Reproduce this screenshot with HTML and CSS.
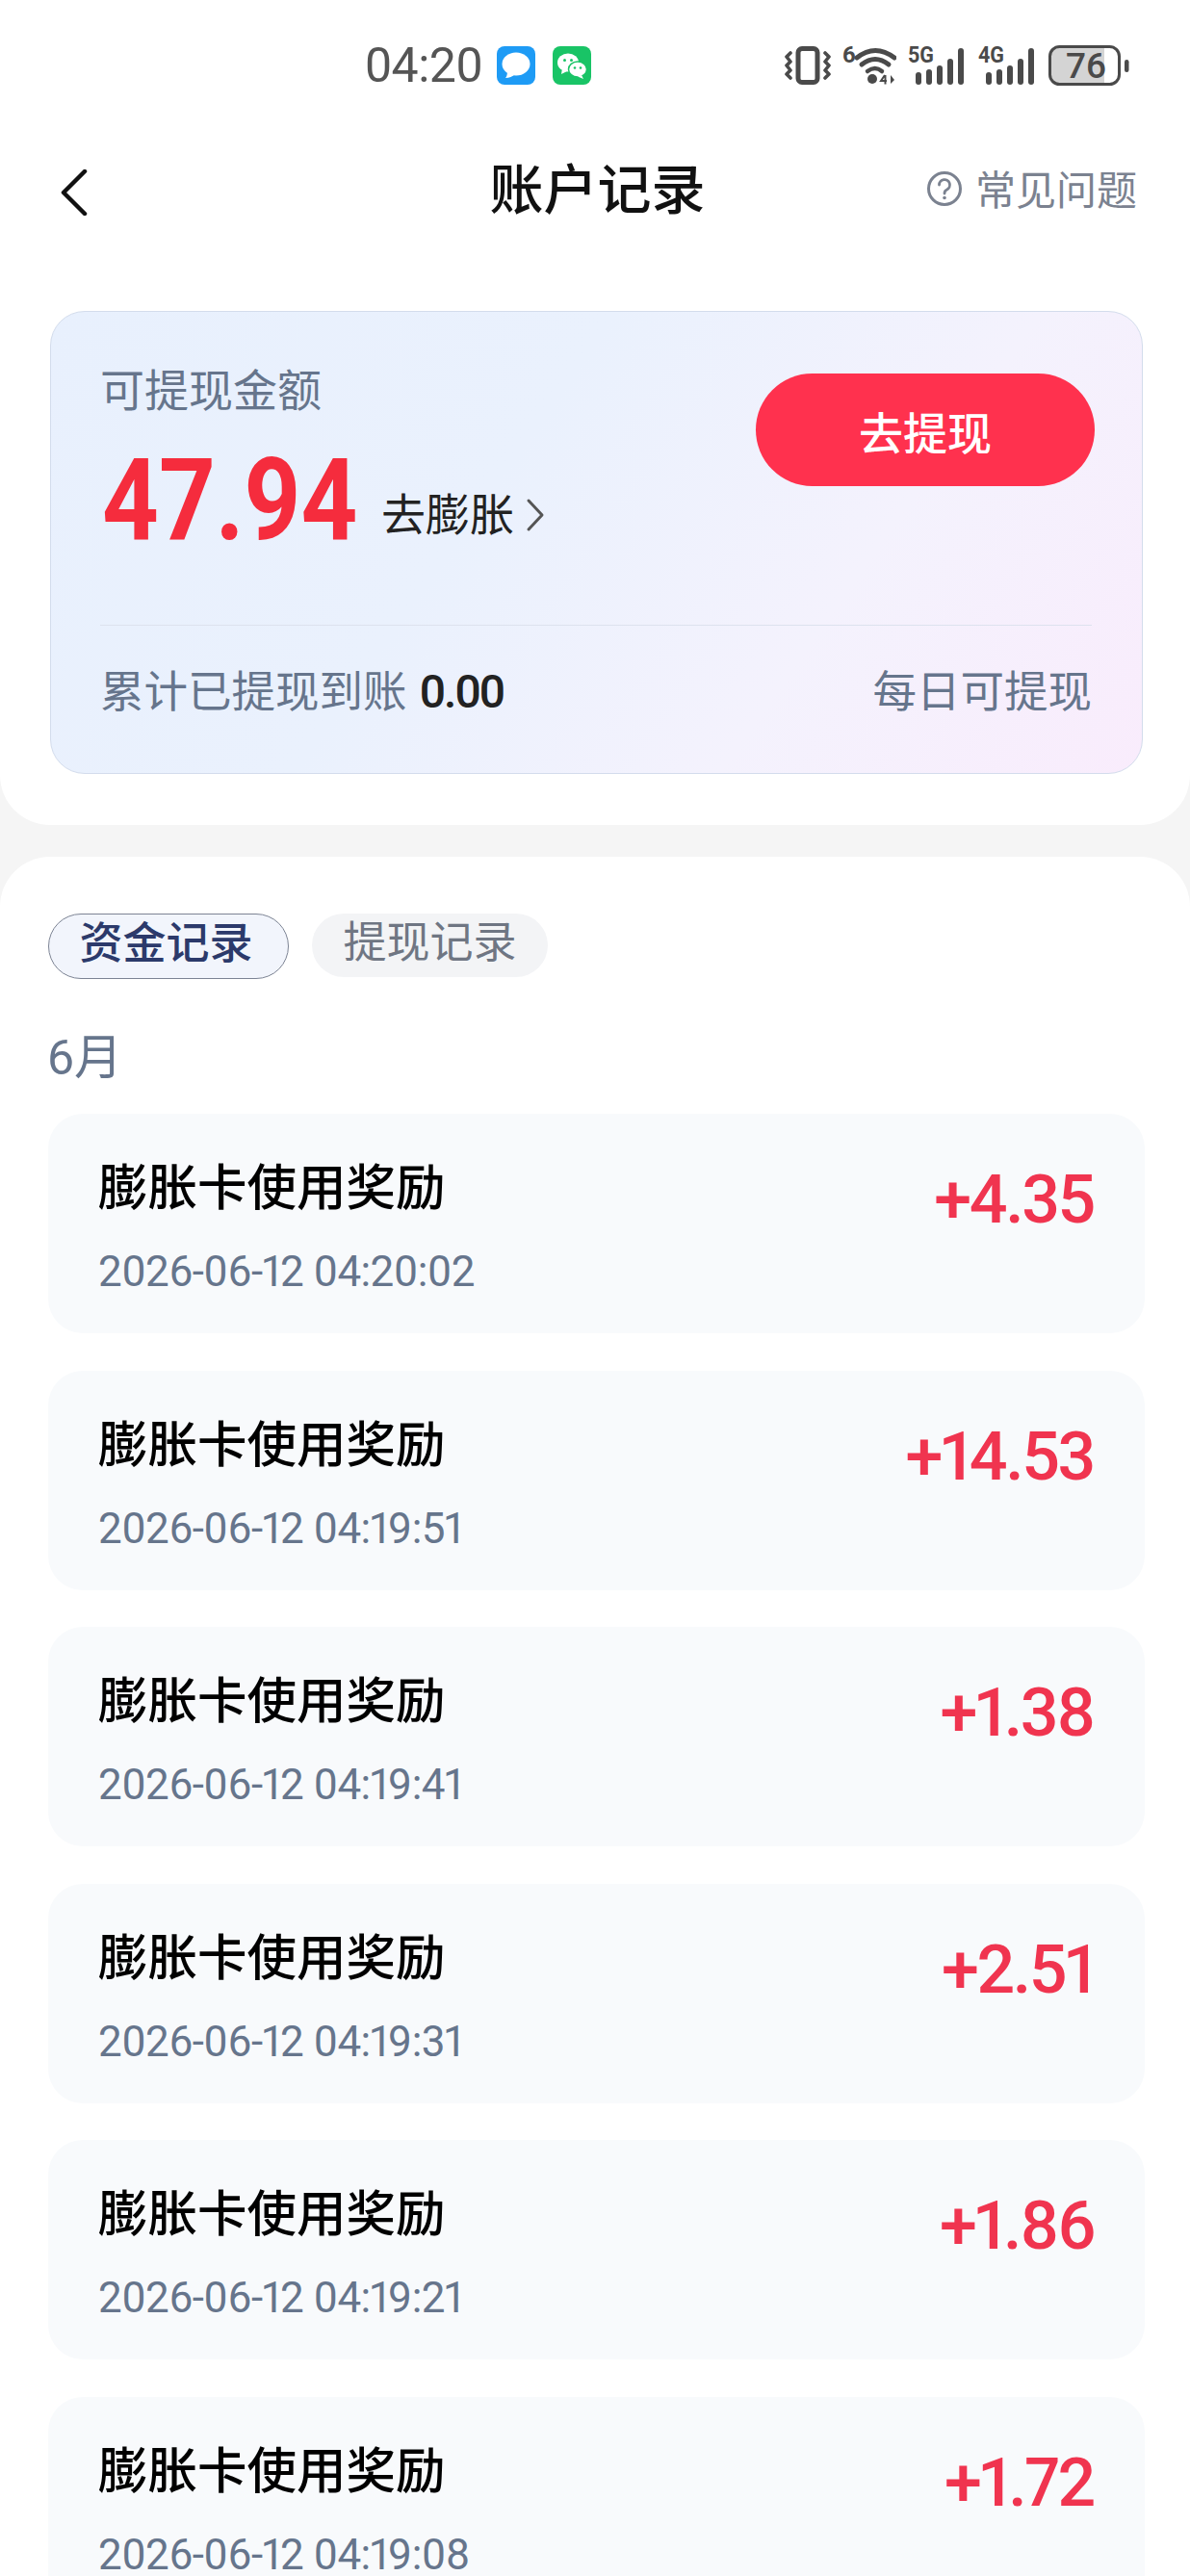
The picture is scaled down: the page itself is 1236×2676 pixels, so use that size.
FILE: index.html
```html
<!DOCTYPE html>
<html lang="zh-CN">
<head>
  <meta charset="UTF-8">
  <meta name="viewport" content="width=device-width, initial-scale=1">
  <title>账户记录</title>
  <link rel="stylesheet" href="styles.css">
</head>
<body>

  <!-- 顶部：状态栏 + 标题 + 余额卡片 -->
  <div class="top-panel">
    <div class="status-bar">
      <div class="status-left">
        <span class="time">04:20</span>
        <svg class="app-icon" viewBox="0 0 40 40">
          <rect width="40" height="40" rx="8" fill="#1e9bf5"/>
          <ellipse cx="20" cy="18.5" rx="14.5" ry="12" fill="#fff"/>
          <path d="M11 26 Q11 31 9 33 Q15 33 19 29 Z" fill="#fff"/>
        </svg>
        <svg class="app-icon" viewBox="0 0 40 40">
          <rect width="40" height="40" rx="8" fill="#19c466"/>
          <ellipse cx="16" cy="17" rx="11" ry="9.5" fill="#fff"/>
          <path d="M10 23 L9 29 L15 26 Z" fill="#fff"/>
          <ellipse cx="26" cy="24" rx="9.5" ry="8" fill="#fff" stroke="#19c466" stroke-width="1.5"/>
          <path d="M30 30 L32 34 L26 31.5 Z" fill="#fff"/>
          <circle cx="12.5" cy="14.5" r="1.5" fill="#19c466"/>
          <circle cx="19.5" cy="14.5" r="1.5" fill="#19c466"/>
          <circle cx="23" cy="22.5" r="1.3" fill="#19c466"/>
          <circle cx="29" cy="22.5" r="1.3" fill="#19c466"/>
        </svg>
      </div>
      <div class="status-right">
        <svg class="st-vibrate" viewBox="0 0 48 40" fill="none" stroke="#4a4a4a">
          <rect x="14" y="2.5" width="20" height="35" rx="4" stroke-width="5"/>
          <path d="M6 7 L2 11 L6 16 L2 20 L6 25 L2 29 L6 33" stroke-width="3.6" stroke-linecap="round" stroke-linejoin="round"/>
          <path d="M42 7 L46 11 L42 16 L46 20 L42 25 L46 29 L42 33" stroke-width="3.6" stroke-linecap="round" stroke-linejoin="round"/>
        </svg>
        <svg class="st-wifi" viewBox="0 -6 56 46" fill="none" stroke="#4a4a4a">
          <text x="0" y="17" class="st-text" font-size="24">6</text>
          <path d="M15 12 Q34 -3 54 12" stroke-width="5" stroke-linecap="round"/>
          <path d="M20 19 Q34 8 48 19" stroke-width="5" stroke-linecap="round"/>
          <path d="M26 26 Q34 20 41 26" stroke-width="4.5" stroke-linecap="round"/>
          <circle cx="31" cy="34" r="5" fill="#4a4a4a" stroke="none"/>
          <path d="M44 30 L40 36 H46 M44.5 30 V39.5" stroke-width="2"/>
          <path d="M50 30 V39 L54 35 Z" fill="#4a4a4a" stroke="none"/>
        </svg>
        <svg class="st-signal" viewBox="0 -6 58 46" fill="#4a4a4a">
          <text x="0" y="17" class="st-text" font-size="24" textLength="27" lengthAdjust="spacingAndGlyphs">5G</text>
          <rect x="8" y="27" width="6" height="13" rx="3"/>
          <rect x="19" y="24" width="6" height="16" rx="3"/>
          <rect x="30" y="20" width="6" height="20" rx="3"/>
          <rect x="41" y="13" width="6" height="27" rx="3"/>
          <rect x="52" y="2" width="6" height="38" rx="3"/>
        </svg>
        <svg class="st-signal" viewBox="0 -6 58 46" fill="#4a4a4a">
          <text x="0" y="17" class="st-text" font-size="24" textLength="27" lengthAdjust="spacingAndGlyphs">4G</text>
          <rect x="8" y="27" width="6" height="13" rx="3"/>
          <rect x="19" y="24" width="6" height="16" rx="3"/>
          <rect x="30" y="20" width="6" height="20" rx="3"/>
          <rect x="41" y="13" width="6" height="27" rx="3"/>
          <rect x="52" y="2" width="6" height="38" rx="3"/>
        </svg>
        <svg class="st-battery" viewBox="0 0 84 42">
          <path d="M10 3 H58 V39 H10 A8 8 0 0 1 2 31 V11 A8 8 0 0 1 10 3 Z" fill="#d4d4d4"/>
          <rect x="1.5" y="1.5" width="72" height="39" rx="10" fill="none" stroke="#4a4a4a" stroke-width="3"/>
          <rect x="79" y="15" width="4.5" height="13" rx="2.2" fill="#4a4a4a"/>
          <text x="18" y="34" class="st-battery-num" font-size="37">76</text>
        </svg>
      </div>
    </div>

    <div class="header">
      <svg class="back" viewBox="0 0 28 48" fill="none" stroke="#111" stroke-width="4.5" stroke-linecap="round" stroke-linejoin="round">
        <path d="M25 2 L3 24 L25 46"/>
      </svg>
      <div class="title">账户记录</div>
      <div class="faq">
        <svg class="faq-icon" viewBox="0 0 38 38" fill="none" stroke="#7b8290">
          <circle cx="19" cy="19" r="16.5" stroke-width="3"/>
          <path d="M13.5 15 A5.5 5.5 0 1 1 21.5 20 Q19 21.2 19 24" stroke-width="2.8" stroke-linecap="round"/>
          <circle cx="19" cy="28.5" r="1.8" fill="#7b8290" stroke="none"/>
        </svg>
        <span>常见问题</span>
      </div>
    </div>

    <div class="balance-card">
      <div class="balance-top">
        <div class="balance-left">
          <div class="balance-label">可提现金额</div>
          <div class="balance-row">
            <span class="balance-num">47.94</span>
            <span class="inflate">去膨胀</span>
            <svg class="inflate-arrow" viewBox="0 0 20 36" fill="none" stroke="#555" stroke-width="3" stroke-linecap="round" stroke-linejoin="round">
              <path d="M3 3 L17 18 L3 33"/>
            </svg>
          </div>
        </div>
        <button class="withdraw-btn">去提现</button>
      </div>
      <div class="balance-bottom">
        <div class="total">累计已提现到账 <b>0.00</b></div>
        <div class="daily">每日可提现</div>
      </div>
    </div>
  </div>

  <!-- 记录列表 -->
  <div class="records">
    <div class="tabs">
      <div class="tab tab-active">资金记录</div>
      <div class="tab">提现记录</div>
    </div>
    <div class="month">6月</div>

    <div class="record">
      <div>
        <div class="record-name">膨胀卡使用奖励</div>
        <div class="record-date">2026-06-12 04:20:02</div>
      </div>
      <div class="record-amount">+4.35</div>
    </div>
    <div class="record">
      <div>
        <div class="record-name">膨胀卡使用奖励</div>
        <div class="record-date">2026-06-12 04:19:51</div>
      </div>
      <div class="record-amount">+14.53</div>
    </div>
    <div class="record">
      <div>
        <div class="record-name">膨胀卡使用奖励</div>
        <div class="record-date">2026-06-12 04:19:41</div>
      </div>
      <div class="record-amount">+1.38</div>
    </div>
    <div class="record">
      <div>
        <div class="record-name">膨胀卡使用奖励</div>
        <div class="record-date">2026-06-12 04:19:31</div>
      </div>
      <div class="record-amount">+2.51</div>
    </div>
    <div class="record">
      <div>
        <div class="record-name">膨胀卡使用奖励</div>
        <div class="record-date">2026-06-12 04:19:21</div>
      </div>
      <div class="record-amount">+1.86</div>
    </div>
    <div class="record">
      <div>
        <div class="record-name">膨胀卡使用奖励</div>
        <div class="record-date">2026-06-12 04:19:08</div>
      </div>
      <div class="record-amount">+1.72</div>
    </div>
  </div>

</body>
</html>
```

FILE: styles.css
```css
* { margin: 0; padding: 0; box-sizing: border-box; }

html, body {
  height: 2676px;
  overflow: hidden;
}

body {
  font-family: Roboto, 'Noto Sans CJK SC', sans-serif;
  background-color: #f5f5f5;
  color: #111;
}

/* top */
.top-panel {
  height: 857px;
  background-color: #fff;
  border-radius: 0 0 52px 52px;
}

.status-bar {
  height: 136px;
  display: flex;
  justify-content: space-between;
  align-items: center;
  padding: 0 63px 0 379px;
}

.status-left {
  display: flex;
  align-items: center;
  gap: 18px;
}

.time {
  font-size: 50px;
  letter-spacing: -0.5px;
  color: #555;
  margin-right: -3px;
}

.app-icon {
  width: 40px;
  height: 40px;
}

.status-right {
  display: flex;
  align-items: center;
  gap: 12px;
}

.st-text {
  font-family: Roboto, sans-serif;
  font-weight: 700;
  fill: #4a4a4a;
  stroke: none;
}

.st-battery-num {
  font-family: Roboto, sans-serif;
  font-weight: 500;
  fill: #4a4a4a;
}

.st-vibrate { width: 48px; height: 40px; }
.st-wifi { width: 56px; height: 46px; margin-top: -6px; }
.st-signal { width: 58px; height: 46px; margin-top: -6px; }
.st-signal + .st-signal { margin-left: 3px; }
.st-battery { width: 84px; height: 42px; margin-left: 3px; }

.header {
  height: 112px;
  display: grid;
  grid-template-columns: 1fr auto 1fr;
  align-items: center;
  padding: 0 55px 0 63px;
}

.back {
  width: 28px;
  height: 48px;
  margin-top: 16px;
}

.title {
  margin-left: -3px;
  font-size: 56px;
  font-weight: 500;
  color: #111;
}

.faq {
  display: flex;
  align-items: center;
  justify-content: flex-end;
  gap: 13px;
  margin-top: 4px;
  font-size: 42px;
  color: #7b8290;
}

.faq-icon {
  width: 38px;
  height: 38px;
  margin-top: 4px;
}

.balance-card {
  height: 481px;
  margin: 75px 49px 0 52px;
  padding: 52px 52px 0 51px;
  border: 1px solid #d3dcec;
  border-radius: 36px;
  background: linear-gradient(125deg, #e8f0fd 0%, #eaf1fd 40%, #f4f2fd 70%, #f9ecfc 100%);
}

.balance-top {
  display: flex;
  justify-content: space-between;
  align-items: flex-start;
  height: 273px;
}

.balance-label {
  font-size: 46px;
  line-height: 60px;
  color: #66758c;
}

.balance-row {
  display: flex;
  align-items: flex-end;
  margin-top: 24px;
}

/* the reference digits are narrower than Roboto Bold */
.balance-num {
  font-size: 118px;
  font-weight: 700;
  line-height: 120px;
  color: #f52c3d;
  transform: scaleX(0.87);
  transform-origin: left center;
  margin: 0 -38px 0 2px;
}

.inflate {
  font-size: 46px;
  line-height: 60px;
  color: #222;
  margin: 0 0 15px 23px;
}

.inflate-arrow {
  width: 20px;
  height: 36px;
  margin: 0 0 27px 12px;
}

.withdraw-btn {
  width: 352px;
  height: 117px;
  margin: 12px -3px 0 0;
  border: none;
  border-radius: 59px;
  background-color: #ff314e;
  color: #fff;
  font-family: inherit;
  font-size: 46px;
  font-weight: 500;
}

.balance-bottom {
  display: flex;
  justify-content: space-between;
  align-items: center;
  height: 140px;
  padding-bottom: 10px;
  border-top: 1px solid #dde2ee;
  font-size: 45.5px;
  color: #66758c;
}

.total b {
  font-size: 48px;
  font-weight: 500;
  letter-spacing: -2px;
  color: #222;
  margin-left: 2px;
}

/* records */
.records {
  height: 1800px;
  margin-top: 33px;
  padding: 59px 47px 0 50px;
  background-color: #fff;
  border-radius: 52px 52px 0 0;
}

.tabs {
  display: flex;
  align-items: flex-start;
  gap: 24px;
}

.tab {
  width: 245px;
  height: 66px;
  padding-bottom: 13px;
  display: flex;
  align-items: center;
  justify-content: center;
  border-radius: 34px;
  background-color: #f3f4f6;
  color: #6f7683;
  font-size: 45px;
}

.tab-active {
  width: 250px;
  height: 68px;
  padding-right: 5px;
  background-color: #f2f5fc;
  border: 1px solid #7d8494;
  color: #2c3a6b;
  font-weight: 500;
}

.month {
  margin: 48px 0 0 -1px;
  font-size: 50px;
  line-height: 68px;
  color: #66758c;
}

.record {
  height: 228px;
  margin-top: 24px;
  padding: 46px 53px 0 52px;
  display: flex;
  justify-content: space-between;
  align-items: flex-start;
  border-radius: 36px;
  background-color: #f8fafc;
}

.record + .record {
  margin-top: 38.6px;
}

.record-name {
  font-size: 51.5px;
  font-weight: 500;
  line-height: 64px;
  color: #000;
}

.record-date {
  margin-top: 34px;
  font-size: 44px;
  letter-spacing: -0.6px;
  line-height: 40px;
  font-variant-numeric: proportional-nums;
  color: #66758c;
}

.record-amount {
  margin-top: 3px;
  font-size: 70px;
  font-weight: 500;
  letter-spacing: -2.4px;
  font-variant-numeric: proportional-nums;
  line-height: 80px;
  color: #f0344f;
}
```
